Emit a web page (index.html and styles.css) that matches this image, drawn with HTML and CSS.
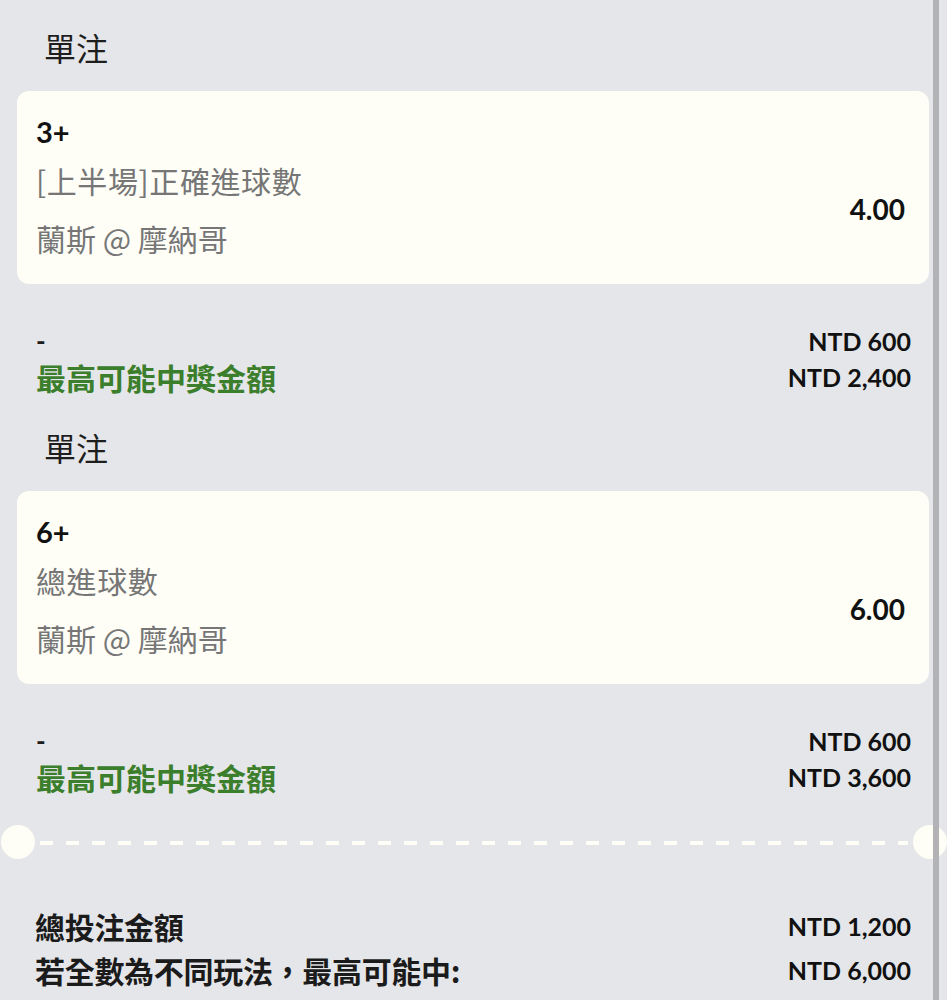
FILE: index.html
```html
<!DOCTYPE html>
<html lang="zh-Hant">
<head>
<meta charset="utf-8">
<title>單注</title>
<link rel="stylesheet" href="styles.css">
</head>
<body>
<div class="page">
  <section class="bet">
    <div class="bet-title">單注</div>
    <div class="card">
      <div class="selection">3+</div>
      <div class="card-row">
        <div class="card-info">
          <div class="market">[上半場]正確進球數</div>
          <div class="match">蘭斯 @ 摩納哥</div>
        </div>
        <div class="odds">4.00</div>
      </div>
    </div>
    <div class="summary">
      <div class="sum-row">
        <span class="dash">-</span>
        <span class="amount">NTD 600</span>
      </div>
      <div class="sum-row">
        <span class="win-label">最高可能中獎金額</span>
        <span class="amount">NTD 2,400</span>
      </div>
    </div>
  </section>

  <section class="bet">
    <div class="bet-title">單注</div>
    <div class="card">
      <div class="selection">6+</div>
      <div class="card-row">
        <div class="card-info">
          <div class="market">總進球數</div>
          <div class="match">蘭斯 @ 摩納哥</div>
        </div>
        <div class="odds">6.00</div>
      </div>
    </div>
    <div class="summary">
      <div class="sum-row">
        <span class="dash">-</span>
        <span class="amount">NTD 600</span>
      </div>
      <div class="sum-row">
        <span class="win-label">最高可能中獎金額</span>
        <span class="amount">NTD 3,600</span>
      </div>
    </div>
  </section>

  <div class="divider">
    <span class="notch notch-left"></span>
    <span class="dashes"></span>
    <span class="notch notch-right"></span>
  </div>

  <div class="totals">
    <div class="total-row">
      <span class="total-label">總投注金額</span>
      <span class="amount">NTD 1,200</span>
    </div>
    <div class="total-row">
      <span class="total-label">若全數為不同玩法，最高可能中:</span>
      <span class="amount">NTD 6,000</span>
    </div>
  </div>
</div>
<div class="scrollbar"></div>
</body>
</html>
```

FILE: styles.css
```css
html, body {
  margin: 0;
  padding: 0;
}

body {
  background: #e5e6e9;
  font-family: Lato, "Noto Sans CJK TC", "Noto Sans", sans-serif;
  color: #1b1b1b;
  width: 947px;
  height: 1000px;
  overflow: hidden;
  position: relative;
}

.page {
  padding: 0 18px 0 17px;
}

.bet {
  padding-top: 25px;
}

.bet-title {
  font-family: "Noto Sans CJK TC", sans-serif;
  font-size: 32px;
  line-height: 44px;
  padding-left: 27px;
  margin-bottom: 22px;
  color: #1e1e1e;
}

.card {
  background: #fefef6;
  border-radius: 12px;
  padding: 18px 24px 21px 19px;
}

.selection {
  font-weight: 700;
  font-size: 29px;
  line-height: 46px;
  color: #111;
}

.card-row {
  display: flex;
  align-items: center;
  justify-content: space-between;
}

.market,
.match {
  font-family: "Noto Sans CJK TC", sans-serif;
  font-size: 30px;
  line-height: 50px;
  color: #767676;
}

.market {
  letter-spacing: 0.6px;
}

.match {
  margin-top: 8px;
}

.odds {
  font-weight: 700;
  font-size: 28px;
  color: #111;
}

.summary {
  margin-top: 39px;
  margin-bottom: 5px;
  padding: 0 18px 0 19px;
}

.sum-row {
  display: flex;
  justify-content: space-between;
  align-items: center;
  height: 36px;
}

.dash {
  font-weight: 700;
  font-size: 26px;
}

.amount {
  font-weight: 700;
  font-size: 25px;
  color: #111;
}

.win-label {
  font-family: "Noto Sans CJK TC", sans-serif;
  font-weight: 700;
  font-size: 30px;
  color: #3b7e2b;
}

.divider {
  display: flex;
  align-items: center;
  margin: 30px -18px 0 -17px;
  height: 34px;
}

.notch {
  width: 34px;
  height: 34px;
  border-radius: 50%;
  background: #fefef6;
  flex: none;
}

.notch-left {
  margin-left: 1px;
}

.dashes {
  flex: 1;
  height: 4px;
  margin: 2px 5px 0 5px;
  background: repeating-linear-gradient(to right, #fefef6 0 13px, transparent 13px 26px);
}

.totals {
  margin-top: 45px;
  padding: 0 18px 0 18px;
}

.total-row {
  display: flex;
  justify-content: space-between;
  align-items: center;
  height: 44px;
}

.total-label {
  font-family: "Noto Sans CJK TC", sans-serif;
  font-weight: 700;
  font-size: 30px;
  letter-spacing: -0.3px;
}

.scrollbar {
  position: absolute;
  top: 0;
  bottom: 0;
  left: 933px;
  width: 6px;
  background: #b3b3b6;
}
```
